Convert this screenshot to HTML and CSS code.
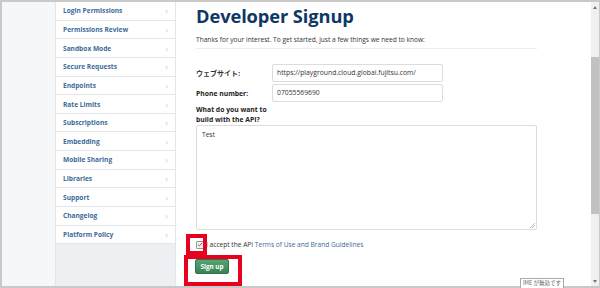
FILE: index.html
```html
<!DOCTYPE html>
<html lang="en">
<head>
<meta charset="utf-8">
<title>Developer Signup</title>
<link rel="stylesheet" href="styles.css">
</head>
<body>
<div class="frame">
  <div class="gutter"></div>
  <nav class="sidebar">
    <ul class="nav">
      <li class="nav-item"><span>Login Permissions</span><span class="chev">&rsaquo;</span></li>
      <li class="nav-item"><span>Permissions Review</span><span class="chev">&rsaquo;</span></li>
      <li class="nav-item"><span>Sandbox Mode</span><span class="chev">&rsaquo;</span></li>
      <li class="nav-item"><span>Secure Requests</span><span class="chev">&rsaquo;</span></li>
      <li class="nav-item"><span>Endpoints</span><span class="chev">&rsaquo;</span></li>
      <li class="nav-item"><span>Rate Limits</span><span class="chev">&rsaquo;</span></li>
      <li class="nav-item"><span>Subscriptions</span><span class="chev">&rsaquo;</span></li>
      <li class="nav-item"><span>Embedding</span><span class="chev">&rsaquo;</span></li>
      <li class="nav-item"><span>Mobile Sharing</span><span class="chev">&rsaquo;</span></li>
      <li class="nav-item"><span>Libraries</span><span class="chev">&rsaquo;</span></li>
      <li class="nav-item"><span>Support</span><span class="chev">&rsaquo;</span></li>
      <li class="nav-item"><span>Changelog</span><span class="chev">&rsaquo;</span></li>
      <li class="nav-item"><span>Platform Policy</span><span class="chev">&rsaquo;</span></li>
    </ul>
  </nav>
  <main class="main">
    <h1 class="title">Developer Signup</h1>
    <p class="intro">Thanks for your interest. To get started, just a few things we need to know:</p>
    <hr class="rule">
    <div class="row">
      <label class="label jp">ウェブサイト:</label>
      <div class="input">https://playground.cloud.global.fujitsu.com/</div>
    </div>
    <div class="row">
      <label class="label">Phone number:</label>
      <div class="input">07055569690</div>
    </div>
    <label class="label block">What do you want to<br>build with the API?</label>
    <div class="textarea">Test<span class="grip"></span></div>
    <div class="accept">
      <span class="checkbox">
        <svg width="7" height="7" viewBox="0 0 7 7"><path d="M1 3.6 L2.8 5.3 L6 1.5" fill="none" stroke="#555" stroke-width="1"/></svg>
      </span>
      <span>I accept the API <a class="link">Terms of Use and Brand Guidelines</a></span>
    </div>
    <button class="btn">Sign up</button>
    <span class="mark mark-check"></span>
    <span class="mark mark-btn"></span>
    <span class="ime">IME が無効です</span>
  </main>
  <div class="scrollbar">
    <span class="arrow up"></span>
    <span class="thumb"></span>
    <span class="arrow down"></span>
  </div>
</div>
</body>
</html>
```
FILE: styles.css
```css
* { box-sizing: border-box; }
html, body { margin: 0; padding: 0; }
body {
  width: 600px;
  height: 288px;
  overflow: hidden;
  font-family: "Open Sans", "Noto Sans", "Noto Sans CJK JP", sans-serif;
  color: #333;
  background: #fff;
}
.frame {
  display: flex;
  width: 600px;
  height: 288px;
  border: 2px solid #c9c9c9;
  border-right-width: 1px;
  border-bottom-width: 2px;
}
.gutter {
  width: 53px;
  background: #f6f7f9;
}
.sidebar {
  width: 121px;
  background: #edeff2;
  border-left: 1px solid #e2e5ea;
  border-right: 1px solid #e2e5ea;
}
.nav {
  list-style: none;
  margin: 0;
  padding: 0;
  background: #fff;
}
.nav-item {
  display: flex;
  align-items: center;
  justify-content: space-between;
  height: 18.65px;
  padding: 0 7px 0 7px;
  border-bottom: 1px solid #e3e6eb;
  font-size: 6.6px;
  font-weight: 700;
  color: #3e6a98;
}
.chev {
  color: #c9cdd3;
  font-size: 9px;
  font-weight: 400;
}
.main {
  position: relative;
  flex: 1;
  padding: 0 0 0 20px;
  background: #fff;
}
.title {
  margin: 1px 0 0 0;
  font-size: 18.3px;
  line-height: 26px;
  font-weight: 700;
  color: #0f3764;
  letter-spacing: -0.1px;
}
.intro {
  margin: 6px 0 0 0;
  font-size: 6.6px;
  line-height: 10px;
  color: #333;
}
.rule {
  margin: 3px 0 0 0;
  width: 341px;
  border: 0;
  border-top: 1px solid #ececec;
}
.row {
  display: flex;
  align-items: center;
  margin-top: 2px;
}
.rule + .row { margin-top: 15px; }
.label {
  width: 76px;
  font-size: 6.8px;
  font-weight: 700;
  color: #222;
}
.label.jp {
  font-family: "Noto Sans CJK JP", sans-serif;
  font-weight: 700;
  font-size: 7px;
  color: #333;
}
.label.block {
  display: block;
  width: auto;
  margin-top: 3px;
  line-height: 10px;
}
.input {
  width: 171px;
  height: 18px;
  line-height: 16px;
  padding-left: 4px;
  border: 1px solid #dcdcdc;
  border-radius: 2px;
  font-size: 6.8px;
  color: #333;
}
.textarea {
  position: relative;
  width: 341px;
  height: 105px;
  margin-top: 0;
  padding: 4px 5px;
  border: 1px solid #dcdcdc;
  border-radius: 2px;
  font-size: 6.6px;
  color: #333;
}
.grip {
  position: absolute;
  right: 1px;
  bottom: 1px;
  width: 5px;
  height: 5px;
  background: linear-gradient(135deg, transparent 45%, #bbb 45%, #bbb 55%, transparent 55%, transparent 70%, #bbb 70%, #bbb 80%, transparent 80%);
}
.accept {
  display: flex;
  align-items: center;
  gap: 2px;
  margin-top: 10px;
  font-size: 6.6px;
  color: #333;
}
.checkbox {
  display: inline-flex;
  align-items: center;
  justify-content: center;
  width: 8px;
  height: 8px;
  border: 1px solid #999;
  border-radius: 1px;
  background: #f4f4f4;
}
.link { color: #3e6a98; }
.btn {
  display: block;
  margin: 10px 0 0 -1px;
  width: 34px;
  height: 15px;
  padding: 0;
  border: 1px solid #2f7348;
  border-radius: 2px;
  background: linear-gradient(#55a574, #3a8257);
  color: #fff;
  font-family: "Open Sans", sans-serif;
  font-size: 6.4px;
  font-weight: 700;
}
.mark {
  position: absolute;
  border: 4px solid #e8001f;
}
.mark-check {
  left: 10px;
  top: 232px;
  width: 21px;
  height: 21px;
}
.mark-btn {
  left: 8px;
  top: 253px;
  width: 58px;
  height: 31px;
}
.ime {
  position: absolute;
  left: 344px;
  top: 276px;
  height: 11px;
  padding: 0 2px;
  border: 1px solid #aaa;
  background: #fff;
  font-family: "Noto Sans CJK JP", sans-serif;
  font-size: 5.5px;
  line-height: 9px;
  color: #666;
}
.scrollbar {
  position: relative;
  width: 8px;
  background: #f0f0f0;
}
.thumb {
  position: absolute;
  left: 0;
  top: 55px;
  width: 8px;
  height: 157px;
  background: #c1c1c1;
}
.arrow {
  position: absolute;
  left: 2px;
  width: 0;
  height: 0;
  border-left: 2px solid transparent;
  border-right: 2px solid transparent;
}
.arrow.up { top: 4px; border-bottom: 3px solid #777; }
.arrow.down { bottom: 3px; border-top: 3px solid #777; }
```
